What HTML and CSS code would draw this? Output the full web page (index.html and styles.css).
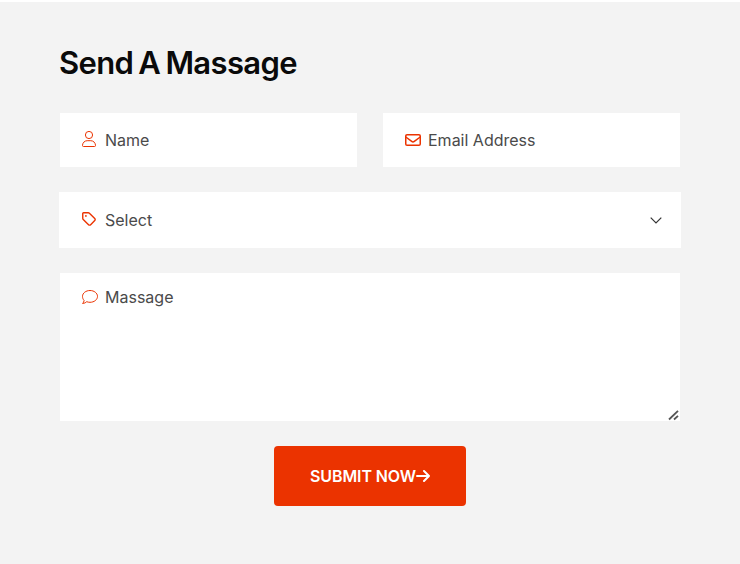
FILE: index.html
```html
<!DOCTYPE html>
<html lang="en">
<head>
<meta charset="utf-8">
<title>Send A Massage</title>
<link rel="stylesheet" href="styles.css">
</head>
<body>
<main class="contact">
  <h2 class="title">Send A Massage</h2>
  <form class="form">
    <div class="row">
      <label class="field">
        <svg class="icon user" viewBox="0 0 14 16"><circle cx="7" cy="4" r="3.6"/><path d="M.5 14.5C.5 11.8 2.6 9.7 5.2 9.7h3.6c2.6 0 4.7 2.1 4.7 4.8q0 1-1 1h-11q-1 0-1-1z"/></svg>
        <span>Name</span>
      </label>
      <label class="field">
        <svg class="icon mail" viewBox="0 0 16 12"><rect x=".75" y=".75" width="14.5" height="10.5" rx="1.3"/><path d="M.8 3l5.9 4.4q1.3 1 2.6 0L15.2 3"/></svg>
        <span>Email Address</span>
      </label>
    </div>
    <div class="field select">
      <svg class="icon tag" viewBox="0 0 14 14"><path d="M.75 1.5v4.7c0 .5.2.9.5 1.2l5.3 5.3c.6.6 1.5.6 2.1 0l4.1-4.1c.6-.6.6-1.5 0-2.1L7.4 1.25C7.1.95 6.7.75 6.2.75H1.5a.75.75 0 0 0-.75.75z"/><circle class="dot" cx="3.9" cy="3.9" r=".9"/></svg>
      <span>Select</span>
      <svg class="chevron" viewBox="0 0 12 7"><path d="M.7.7 6 6 11.3.7"/></svg>
    </div>
    <label class="field message">
      <svg class="icon chat" viewBox="0 0 16 14"><path d="M8 .5c4.1 0 7.5 2.6 7.5 5.900S12.100 12.300 8 12.300c-1.200 0-2.300-.2-3.300-.6-1 .9-2.400 1.700-4.100 1.800.8-.9 1.400-1.900 1.500-3C1.100 9.400.5 8 .5 6.400.5 3.100 3.900.5 8 .5z"/></svg>
      <span>Massage</span>
      <svg class="grip" viewBox="0 0 11 11"><path d="M1 9.500 10 .8M6 9.500 10 5.800"/></svg>
    </label>
    <button class="submit" type="button"><span>SUBMIT NOW</span><svg class="arrow" viewBox="0 0 14 12"><path d="M1 6h12M8 1l5 5-5 5"/></svg></button>
  </form>
</main>
</body>
</html>
```
FILE: styles.css
```css
* { box-sizing: border-box; }
body {
  margin: 0;
  background: #fff;
  font-family: Inter, "Liberation Sans", sans-serif;
  color: #4a4a4a;
}
.contact {
  margin-top: 2px;
  height: 562px;
  padding: 41px 59px 0;
  background: #f3f3f3;
}
.title {
  margin: 0;
  height: 70px;
  font-size: 31px;
  line-height: 40px;
  font-weight: 600;
  letter-spacing: -0.65px;
  word-spacing: -2px;
  color: #0a0a0a;
  white-space: nowrap;
}
.form {
  display: flex;
  flex-direction: column;
  align-items: center;
  gap: 25px;
}
.row {
  display: grid;
  grid-template-columns: 1fr 1fr;
  gap: 26px;
  width: 620px;
}
.field {
  display: flex;
  align-items: center;
  height: 54px;
  padding-left: 22px;
  background: #fff;
  font-size: 16px;
  line-height: 24px;
}
.icon {
  flex: none;
  fill: none;
  stroke: #eb3300;
}
.user { width: 14px; height: 16px; margin-right: 9px; margin-top: -2px; }
.mail { width: 16px; height: 12px; margin-right: 7px; stroke-width: 1.5; }
.tag { width: 14px; height: 14px; margin-right: 9px; margin-top: -2px; stroke-width: 1.4; }
.tag .dot { fill: #eb3300; stroke: none; }
.chat { width: 16px; height: 14px; margin-right: 7px; margin-top: 5px; }
.select {
  width: 622px;
  height: 56px;
  padding: 0 19px 0 23px;
}
.chevron {
  width: 12px;
  height: 7px;
  margin-left: auto;
  fill: none;
  stroke: #333;
  stroke-width: 1.2;
}
.message {
  position: relative;
  width: 620px;
  height: 148px;
  padding-top: 12px;
  align-items: flex-start;
}
.grip {
  position: absolute;
  right: 1px;
  bottom: 0;
  width: 11px;
  height: 11px;
  fill: none;
  stroke: #555;
  stroke-width: 1.8;
}
.submit {
  display: flex;
  align-items: center;
  justify-content: center;
  width: 192px;
  height: 60px;
  padding: 0;
  border: 0;
  border-radius: 4px;
  background: #eb3300;
  color: #fff;
  font: 600 16px/24px Inter, "Liberation Sans", sans-serif;
  letter-spacing: -0.1px;
  white-space: nowrap;
}
.arrow {
  width: 14px;
  height: 12px;
  fill: none;
  stroke: #fff;
  stroke-width: 2;
  stroke-linecap: round;
  stroke-linejoin: round;
}
```
